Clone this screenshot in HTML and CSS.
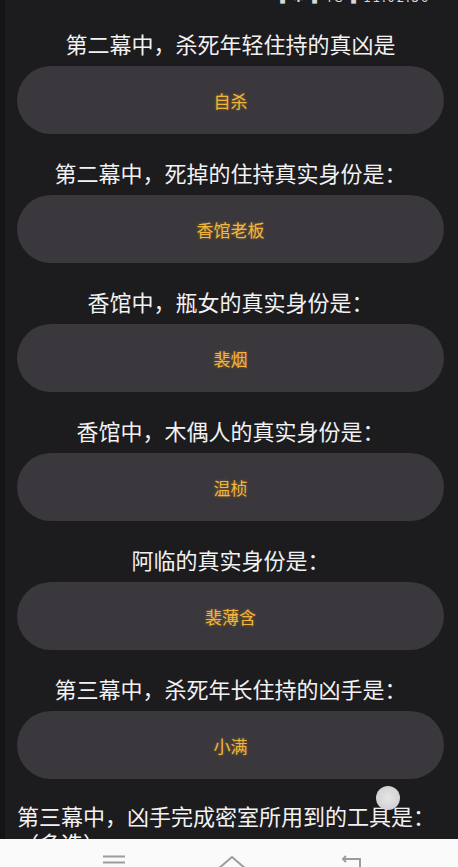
FILE: index.html
```html
<!DOCTYPE html>
<html lang="zh-CN">
<head>
    <meta charset="UTF-8">
    <meta name="viewport" content="width=device-width, initial-scale=1.0">
    <title>答题</title>
    <link rel="stylesheet" href="styles.css">
</head>
<body>
    <div class="status">
        <span class="status-text">▮ ✱ ▮ 4G ▮ 11:02:36</span>
    </div>

    <div class="quiz">
        <div class="item">
            <p class="question">第二幕中，杀死年轻住持的真凶是</p>
            <div class="answer">自杀</div>
        </div>
        <div class="item">
            <p class="question">第二幕中，死掉的住持真实身份是：</p>
            <div class="answer">香馆老板</div>
        </div>
        <div class="item">
            <p class="question">香馆中，瓶女的真实身份是：</p>
            <div class="answer">裴烟</div>
        </div>
        <div class="item">
            <p class="question">香馆中，木偶人的真实身份是：</p>
            <div class="answer">温桢</div>
        </div>
        <div class="item">
            <p class="question">阿临的真实身份是：</p>
            <div class="answer">裴薄含</div>
        </div>
        <div class="item">
            <p class="question">第三幕中，杀死年长住持的凶手是：</p>
            <div class="answer">小满</div>
        </div>
        <div class="item">
            <p class="question question-long">第三幕中，凶手完成密室所用到的工具是：（多选）</p>
        </div>
    </div>

    <!-- touch indicator from the screen recording -->
    <div class="touch-dot"></div>

    <nav class="navbar">
        <svg class="nav-icon" width="22" height="16" viewBox="0 0 22 16">
            <path d="M0 1.5H22M0 7.5H22M0 13.5H22" stroke="#9c9c9c" stroke-width="2" fill="none"/>
        </svg>
        <svg class="nav-icon" width="30" height="16" viewBox="0 0 30 16">
            <path d="M1 14L15 2L29 14" stroke="#9c9c9c" stroke-width="2" fill="none"/>
        </svg>
        <svg class="nav-icon" width="22" height="16" viewBox="0 0 22 16">
            <path d="M4 4H21V16M7 1L4 4L7 7" stroke="#9c9c9c" stroke-width="2" fill="none"/>
        </svg>
    </nav>
</body>
</html>
```

FILE: styles.css
```css
body {
    margin: 0;
    background-color: #1c1b1e;
    font-family: "Noto Sans CJK SC", "Noto Sans", sans-serif;
    color: #f2f2f2;
    border-left: 5px solid #141315;
    min-height: 867px;
    box-sizing: border-box;
    position: relative;
}

.status {
    height: 4px;
    overflow: hidden;
    display: flex;
    justify-content: flex-end;
    padding-right: 28px;
}

.status-text {
    font-size: 13px;
    line-height: 14px;
    margin-top: -10px;
    color: #d8d8d8;
    letter-spacing: 2px;
}

.quiz {
    padding: 24px 14px 0 12px;
}

.item {
    margin-bottom: 23px;
}

.question {
    width: fit-content;
    margin: 0 auto 8px;
    font-size: 22px;
    line-height: 30px;
    text-align: left;
}

.question-long {
    line-height: 27px;
}

.answer {
    height: 68px;
    border-radius: 34px;
    background-color: #3a383c;
    display: flex;
    align-items: center;
    justify-content: center;
    font-size: 17px;
    color: #f2b43a;
    text-shadow: 0 0 3px rgba(240, 170, 40, 0.45);
}

.touch-dot {
    position: absolute;
    left: 371px;
    top: 786px;
    width: 24px;
    height: 24px;
    border-radius: 50%;
    background: radial-gradient(circle, #e6e6e6 0%, #d2d2d2 70%, #b8a88a 100%);
}

.navbar {
    position: fixed;
    left: 0;
    right: 0;
    bottom: 0;
    height: 28px;
    background-color: #fafafa;
    display: flex;
    justify-content: center;
    align-items: flex-start;
    gap: 92px;
    padding-top: 16px;
    padding-left: 6px;
    box-sizing: border-box;
    overflow: hidden;
}

.nav-icon {
    flex-shrink: 0;
}
```
